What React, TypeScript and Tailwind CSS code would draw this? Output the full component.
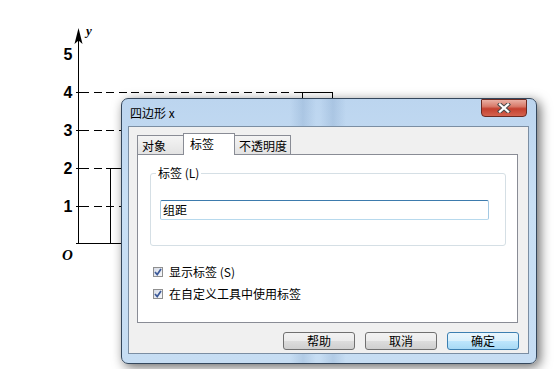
import React from "react";

const cjk = "font-['Noto_Sans_CJK_SC','Noto_Sans',sans-serif]";

function Graph() {
  const dash = "8 4.5";
  return (
    <svg className="absolute left-0 top-0" width={555} height={369} viewBox="0 0 555 369">
      <g stroke="#000" fill="none" shapeRendering="crispEdges">
        <line x1={78.5} y1={38} x2={78.5} y2={243.5} strokeWidth={1.4} />
        <line x1={78} y1={243.5} x2={200} y2={243.5} strokeWidth={1.4} />
        <line x1={81} y1={92.5} x2={302} y2={92.5} strokeDasharray={dash} />
        <line x1={81} y1={130.5} x2={200} y2={130.5} strokeDasharray={dash} />
        <line x1={81} y1={168.5} x2={110} y2={168.5} strokeDasharray={dash} />
        <line x1={81} y1={206.5} x2={200} y2={206.5} strokeDasharray={dash} />
        <polyline points="302.5,243 302.5,92.5 332.5,92.5 332.5,243" />
        <polyline points="110.5,243 110.5,168.5 200,168.5" />
        <line x1={76} y1={92.5} x2={81} y2={92.5} />
        <line x1={76} y1={130.5} x2={81} y2={130.5} />
        <line x1={76} y1={168.5} x2={81} y2={168.5} />
        <line x1={76} y1={206.5} x2={81} y2={206.5} />
        <line x1={76} y1={243.5} x2={80} y2={243.5} />
      </g>
      <path d="M78.5 28 L82.5 44 L78.5 40.5 L74.5 44 Z" fill="#000" />
      <text x={86} y={35} fontFamily="'Liberation Serif', serif" fontStyle="italic" fontWeight="bold" fontSize={13} fill="#000">y</text>
      <g fontFamily="'Liberation Sans', sans-serif" fontWeight="bold" fontSize={16} fill="#000" textAnchor="middle">
        <text x={68} y={60}>5</text>
        <text x={68} y={98}>4</text>
        <text x={68} y={136}>3</text>
        <text x={68} y={174}>2</text>
        <text x={68} y={212}>1</text>
      </g>
      <text x={62} y={260} fontFamily="'Liberation Serif', serif" fontStyle="italic" fontWeight="bold" fontSize={15} fill="#000">O</text>
    </svg>
  );
}

function CheckBox() {
  return (
    <div className="w-[10px] h-[10px] border border-[#8f8f8f] bg-[linear-gradient(135deg,#d6dbe6,#f8f9fb)] flex items-center justify-center">
      <svg width="8" height="8" viewBox="0 0 8 8">
        <path d="M1 4 L3.2 6.6 L7 1" stroke="#3b5998" strokeWidth={1.7} fill="none" />
      </svg>
    </div>
  );
}

function Btn({ label, def }: { label: string; def?: boolean }) {
  return (
    <div
      className={
        def
          ? "w-[72px] h-[18px] rounded-[3px] border border-[#3c7fb1] bg-[linear-gradient(180deg,#eaf6fd_0%,#d9f0fc_50%,#bee6fd_50%,#a7d9f5_100%)] flex items-center justify-center text-[12px] leading-none text-black"
          : "w-[72px] h-[18px] rounded-[3px] border border-[#707070] bg-[linear-gradient(180deg,#f2f2f2_0%,#ebebeb_50%,#dddddd_50%,#cfcfcf_100%)] flex items-center justify-center text-[12px] leading-none text-black"
      }
    >
      {label}
    </div>
  );
}

export default function App() {
  return (
    <div className={`relative w-[555px] h-[369px] bg-white overflow-hidden ${cjk}`}>
      <Graph />
      <div className="absolute left-[121px] top-[98px] w-[416px] h-[266px] flex flex-col rounded-[7px] border border-[#34475c] shadow-[3px_3px_12px_rgba(0,0,0,0.6)] bg-[linear-gradient(90deg,rgba(255,255,255,0)_168px,rgba(70,110,160,0.16)_181px,rgba(255,255,255,0)_194px,rgba(255,255,255,0)_198px,rgba(70,110,160,0.16)_211px,rgba(255,255,255,0)_224px),linear-gradient(180deg,#bcd5ef_0%,#c9e0f5_40%,#c6ddf3_100%)]">
        <div className="h-[27px] shrink-0 flex items-start pl-[8px] pr-[9px]">
          <span className="mt-[6px] text-[12px] leading-[16px] text-black">四边形 x</span>
          <div className="ml-auto w-[46px] h-[18px] rounded-b-[4px] rounded-t-[1px] border border-[#6b2a22] bg-[linear-gradient(180deg,#eab0a4_0%,#d87a6a_40%,#c4402f_55%,#d4634f_100%)] flex items-center justify-center">
            <svg width="14" height="10" viewBox="0 0 14 10">
              <path d="M3 1.5 L11 8.5 M11 1.5 L3 8.5" stroke="#4a4a4a" strokeWidth={4.2} strokeLinecap="square" />
              <path d="M3 1.5 L11 8.5 M11 1.5 L3 8.5" stroke="#ffffff" strokeWidth={2.3} strokeLinecap="square" />
            </svg>
          </div>
        </div>
        <div className="flex-1 ml-[6px] mr-[7px] mb-[9px] border border-[#7b8ea3] bg-[#f0f0f0] flex flex-col pl-[8px] pr-[10px] pt-[6px] text-black">
          <div className="relative z-10 flex items-end h-[21px] text-[12px]">
            <div className="h-[19px] w-[47px] border border-b-0 border-[#898c95] bg-[linear-gradient(180deg,#f4f4f4,#e3e3e3)] pl-[4px] leading-[19px]">对象</div>
            <div className="h-[22px] w-[52px] -mx-px -mb-px border border-b-0 border-[#898c95] bg-white pl-[6px] leading-[19px] relative z-10">标签</div>
            <div className="h-[19px] w-[57px] border border-b-0 border-[#898c95] bg-[linear-gradient(180deg,#f4f4f4,#e3e3e3)] pl-[4px] leading-[19px]">不透明度</div>
          </div>
          <div className="h-[169px] border border-[#898c95] bg-white flex flex-col pl-[12px] pr-[11px] pt-[18px] text-[12px]">
            <div className="relative h-[73px] border border-[#d5dfe5] rounded-[3px] flex flex-col">
              <span className="absolute left-[5px] top-[-9px] px-[2px] bg-white leading-[16px]">标签 (L)</span>
              <div className="mt-[26px] ml-[9px] w-[329px] h-[20px] rounded-[2px] border border-t-[#3d7bad] border-x-[#a4c9e3] border-b-[#b7d9ed] pl-[2px] leading-[18px]">组距</div>
            </div>
            <div className="mt-[18px] ml-[3px] h-[16px] flex items-center gap-[6px] leading-[16px]">
              <CheckBox />
              <span>显示标签 (S)</span>
            </div>
            <div className="mt-[6px] ml-[3px] h-[16px] flex items-center gap-[6px] leading-[16px]">
              <CheckBox />
              <span>在自定义工具中使用标签</span>
            </div>
          </div>
          <div className="mt-[9px] -mr-px flex justify-end gap-[10px]">
            <Btn label="帮助" />
            <Btn label="取消" />
            <Btn label="确定" def />
          </div>
        </div>
      </div>
    </div>
  );
}
